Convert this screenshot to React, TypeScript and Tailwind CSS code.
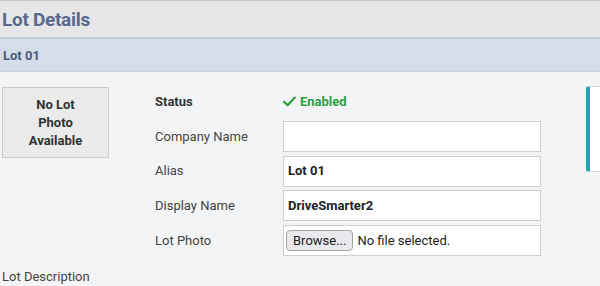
import React from "react";

const rows = [
  { label: "Company Name", value: "" },
  { label: "Alias", value: "Lot 01" },
  { label: "Display Name", value: "DriveSmarter2" },
];

export default function App() {
  return (
    <div className="w-[600px] h-[286px] overflow-hidden bg-[#f3f4f6] font-['Roboto',sans-serif] text-[#333]">
      {/* Page title */}
      <div className="h-[38px] bg-[#e6e6e9] border-t border-[#c9c9ce] border-b border-b-[#c4c8ce] flex items-center px-[2px]">
        <h1 className="text-[19px] font-bold text-[#58698b] leading-none tracking-[-0.3px]">Lot Details</h1>
      </div>

      {/* Section header */}
      <div className="h-[34px] bg-[#d5dde8] border-t border-[#c8ced8] border-b border-b-[#ccd2dc] flex items-center px-[3px]">
        <h2 className="text-[13px] font-bold text-[#4b5b77] leading-none">Lot 01</h2>
      </div>

      <div className="px-[2px] pt-[14px] overflow-hidden">
        <div className="flex items-start">
          <div className="shrink-0 w-[107px] h-[71px] mt-[1px] bg-[#ebebec] border border-[#cdcdcf] flex items-center justify-center text-center text-[13px] font-bold leading-[18px] text-[#333]">
            <span>No Lot<br />Photo<br />Available</span>
          </div>

          <div className="shrink-0 ml-[46px] grid grid-cols-[128px_258px] auto-rows-[31px] gap-y-[3.75px] text-[13px]">
            <div className="flex items-center font-bold text-[#333]">Status</div>
            <div className="flex items-center gap-[4px] font-bold text-[#2f9e41]">
              <svg width="13" height="11" viewBox="0 0 13 11" fill="none">
                <path d="M1.2 5.8 L4.6 9.2 L11.8 1.6" stroke="#2f9e41" strokeWidth="2.2" strokeLinecap="round" strokeLinejoin="round" />
              </svg>
              Enabled
            </div>

            {rows.map((r) => (
              <React.Fragment key={r.label}>
                <div className="flex items-center text-[#444]">{r.label}</div>
                <div className="bg-white border border-[#cfcfd2] flex items-center px-[4px] font-bold text-[#222]">
                  {r.value}
                </div>
              </React.Fragment>
            ))}

            <div className="flex items-center text-[#444]">Lot Photo</div>
            <div className="bg-white border border-[#cfcfd2] flex items-center px-[2px] gap-[4px] text-[#222]">
              <button className="h-[21px] px-[6px] bg-[#e9e9ed] border border-[#a4a4ab] rounded-[4px] text-[13px] leading-none text-[#222]">
                Browse...
              </button>
              <span>No file selected.</span>
            </div>
          </div>

          <div className="shrink-0 ml-[45px] w-[20px] h-[86px] bg-white border border-[#d4d6da] border-l-[4px] border-l-[#2a9fb1] rounded-l-[3px]" />
        </div>

        <div className="mt-[11px] text-[13px] text-[#444]">Lot Description</div>
      </div>
    </div>
  );
}
